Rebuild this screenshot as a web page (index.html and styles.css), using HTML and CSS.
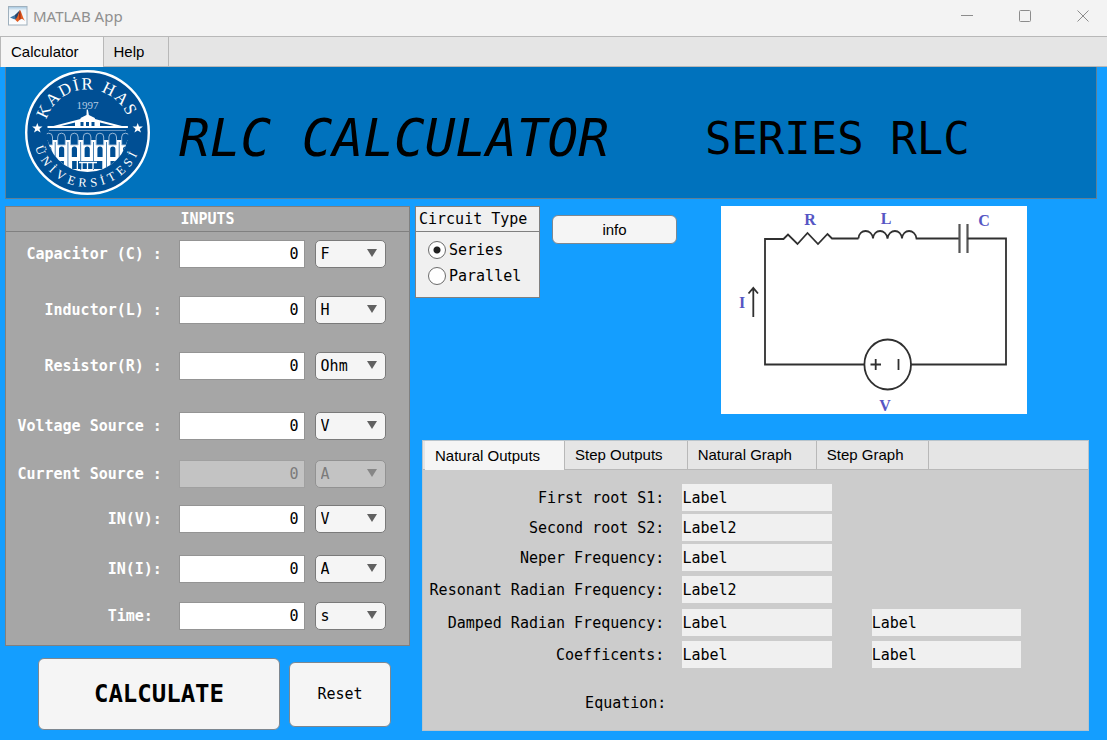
FILE: index.html
```html
<!DOCTYPE html>
<html lang="en">
<head>
<meta charset="utf-8">
<title>MATLAB App</title>
<link rel="stylesheet" href="styles.css">
</head>
<body>
<header class="titlebar">
  <svg class="app-icon" viewBox="0 0 20 20" aria-hidden="true">
    <defs><linearGradient id="ic" x1="0" y1="0" x2="0" y2="1"><stop offset="0" stop-color="#9fc4df"/><stop offset="0.2" stop-color="#e9f1f7"/><stop offset="1" stop-color="#ffffff"/></linearGradient></defs>
    <rect x="0.5" y="0.5" width="18.500" height="18.500" fill="url(#ic)" stroke="#9fb0bd"/>
    <path d="M2 11.500L7 9l2.500-1.500L7.500 13.500L5.500 13z" fill="#3f78a8"/>
    <path d="M7 9l5-5L9.500 13L7.500 13.500z" fill="#27466b"/>
    <path d="M12 4C13.500 6 14.500 11 17 15C14.500 12.500 13 12.500 11.500 14L9.500 16L7 13.500C9.500 12.500 10.500 7 12 4z" fill="#e05c22"/>
    <path d="M12 4C12.800 7 12.500 10 12.500 13L11.500 14L11 8z" fill="#9c2c14"/>
  </svg>
  <span class="app-name">MATLAB App</span>
  <div class="window-controls">
    <button class="window-button" aria-label="Minimize"><svg viewBox="0 0 12 12"><path d="M0 5.500H12"/></svg></button>
    <button class="window-button" aria-label="Maximize"><svg viewBox="0 0 12 12"><rect x="0.500" y="0.500" width="11" height="11" rx="1"/></svg></button>
    <button class="window-button" aria-label="Close"><svg viewBox="0 0 12 12"><path d="M0.500 0.500L11.500 11.500M11.500 0.500L0.500 11.500"/></svg></button>
  </div>
</header>
<nav class="tabs main-tabs" role="tablist">
  <button class="tab active" role="tab" aria-selected="true">Calculator</button>
  <button class="tab" role="tab" aria-selected="false">Help</button>
</nav>
<main class="app">
  <section class="banner">
    <svg class="logo" viewBox="0 0 126 126" role="img" aria-label="Kadir Has Üniversitesi">
      <defs>
        <path id="arc-top" d="M19.500 62.500A43 43 0 0 1 105.500 62.500"/>
        <path id="arc-bottom" d="M8 62.500A54.500 54.500 0 0 0 117 62.500"/>
        <clipPath id="facade"><circle cx="62.500" cy="61" r="41"/></clipPath>
      </defs>
      <circle cx="62.500" cy="62.500" r="61.300" fill="#004f94" stroke="#fff" stroke-width="2.400"/>
      <g class="logo-text">
        <text font-size="17" dx="0 1.500 1.500 1.500 1.500 1 3 1.500 1.500"><textPath href="#arc-top" startOffset="13">KADİR HAS</textPath></text>
        <text font-size="12.500" dx="0 4.400 4.400 4.400 4.400 4.400 4.400 4.400 4.400 4.400 4.400 4.400"><textPath href="#arc-bottom" startOffset="15">ÜNİVERSİTESİ</textPath></text>
        <text font-size="11" x="62.500" y="39" text-anchor="middle" class="logo-year">1997</text>
      </g>
      <g fill="#fff">
        <path d="M12.300 53l1.300 3.600h3.900l-3.100 2.300 1.200 3.700-3.300-2.200-3.300 2.200 1.200-3.700-3.100-2.300h3.900z"/>
        <path d="M112.700 53l1.300 3.600h3.900l-3.100 2.300 1.200 3.700-3.300-2.200-3.300 2.200 1.200-3.700-3.100-2.300h3.900z"/>
        <path d="M61.700 39.500h1.200l1 5.500 6 3v1l27 7h6v2H22.500V56h6l27-7v-1l6-3z"/>
      </g>
      <path d="M36 56l14-3.500V56zM89 56l-14-3.500V56zM55.500 56v-4h3v4zM66.500 56v-4h3v4zM61 56v-4h3v4z" fill="#004f94"/>
      <g clip-path="url(#facade)">
        <path d="M24 60.500H101" stroke="#7ea7cf" stroke-width="0.800"/>
        <path d="M22 70H103V104H22z" fill="#fff"/>
        <g fill="#004f94" stroke="#a9c5df" stroke-width="0.900">
          <path id="bay" d="M32.700 75V67a3.800 3.800 0 0 1 7.600 0v8z"/>
          <use href="#bay" x="-12.800"/><use href="#bay" x="12.800"/><use href="#bay" x="25.600"/><use href="#bay" x="38.400"/><use href="#bay" x="51.200"/><use href="#bay" x="64"/>
        </g>
        <g fill="#004f94">
          <path id="window" d="M34 87V79a2.600 2.600 0 0 1 5.200 0v8zM34.300 99V91h4.600v8zM42.600 72h.7v28h-.7z"/>
          <use href="#window" x="-12.800"/><use href="#window" x="12.800"/><use href="#window" x="25.600"/><use href="#window" x="38.400"/><use href="#window" x="51.200"/><use href="#window" x="64"/>
        </g>
        <path d="M53 91H73V99H53z" fill="#004f94"/>
        <path d="M54 92.500H72M57 93v6M62.500 93v6M68 93v6" stroke="#fff" stroke-width="1.300"/>
      </g>
    </svg>
    <h1 class="title">RLC CALCULATOR</h1>
    <p class="mode">SERIES RLC</p>
  </section>

  <div class="columns">
    <div class="left">
      <section class="inputs">
        <h2 class="inputs-title">INPUTS</h2>
        <form class="input-grid">
          <label class="input-label" for="cap">Capacitor (C) :</label>
          <input class="number" id="cap" value="0">
          <span class="unit"><select aria-label="Capacitor unit"><option>F</option></select></span>
          <label class="input-label" for="ind">Inductor(L) :</label>
          <input class="number" id="ind" value="0">
          <span class="unit"><select aria-label="Inductor unit"><option>H</option></select></span>
          <label class="input-label" for="res">Resistor(R) :</label>
          <input class="number" id="res" value="0">
          <span class="unit"><select aria-label="Resistor unit"><option>Ohm</option></select></span>
          <label class="input-label" for="vs">Voltage Source :</label>
          <input class="number" id="vs" value="0">
          <span class="unit"><select aria-label="Voltage source unit"><option>V</option></select></span>
          <label class="input-label" for="cs">Current Source :</label>
          <input class="number" id="cs" value="0" disabled>
          <span class="unit off"><select aria-label="Current source unit" disabled><option>A</option></select></span>
          <label class="input-label" for="inv">IN(V):</label>
          <input class="number" id="inv" value="0">
          <span class="unit"><select aria-label="IN(V) unit"><option>V</option></select></span>
          <label class="input-label" for="ini">IN(I):</label>
          <input class="number" id="ini" value="0">
          <span class="unit"><select aria-label="IN(I) unit"><option>A</option></select></span>
          <label class="input-label" for="time">Time:&nbsp;</label>
          <input class="number" id="time" value="0">
          <span class="unit"><select aria-label="Time unit"><option>s</option></select></span>
        </form>
      </section>
      <div class="actions">
        <button class="button calculate">CALCULATE</button>
        <button class="button reset">Reset</button>
      </div>
    </div>

    <div class="right">
      <div class="top-row">
        <section class="circuit-type" role="radiogroup" aria-labelledby="ct">
          <h2 class="circuit-title" id="ct">Circuit Type</h2>
          <div class="radios">
            <label class="radio"><input type="radio" name="type" checked>Series</label>
            <label class="radio"><input type="radio" name="type">Parallel</label>
          </div>
        </section>
        <button class="button info">info</button>
        <svg class="circuit" viewBox="0 0 306 208" role="img" aria-label="Series RLC circuit">
          <rect width="306" height="208" fill="#fff"/>
          <g fill="none" stroke="#303030" stroke-width="1.800">
            <path d="M143.500 158.500H44V33H62.500L67 28.500L76.500 38L86.500 27L97 38L106.500 28L111 32.500H137.500"/>
            <path d="M137.500 32.500C138 22.500 151 22.500 152 32.500C153 22.500 165 22.500 166.500 32.500C168 22.500 180 22.500 181 32.500C182 22.500 194 22.500 195.500 32.500H238.500"/>
            <path d="M238.500 18V47M246.500 18V47" stroke="#555" stroke-width="2.200"/>
            <path d="M246.500 32.500H285V158.500H190"/>
            <ellipse cx="166.700" cy="158.500" rx="23.300" ry="25"/>
            <path d="M149.500 158.500H160M154.700 153V164M177.500 153V164"/>
            <path d="M32.300 111V82M27.500 87.500L32.300 82L37 87.500"/>
          </g>
          <g class="circuit-text">
            <text x="89" y="19">R</text><text x="165" y="18">L</text><text x="263" y="20">C</text>
            <text x="21" y="102">I</text><text x="164" y="205">V</text>
          </g>
        </svg>
      </div>

      <section class="outputs">
        <div class="tabs output-tabs" role="tablist">
          <button class="tab active" role="tab" aria-selected="true">Natural Outputs</button>
          <button class="tab" role="tab" aria-selected="false">Step Outputs</button>
          <button class="tab" role="tab" aria-selected="false">Natural Graph</button>
          <button class="tab" role="tab" aria-selected="false">Step Graph</button>
        </div>
        <div class="output-grid">
          <label class="output-label" for="s1">First root S1:</label><output class="value" id="s1">Label</output>
          <label class="output-label" for="s2">Second root S2:</label><output class="value" id="s2">Label2</output>
          <label class="output-label" for="nf">Neper Frequency:</label><output class="value" id="nf">Label</output>
          <label class="output-label" for="rf">Resonant Radian Frequency:</label><output class="value" id="rf">Label2</output>
          <label class="output-label" for="df">Damped Radian Frequency:</label><output class="value" id="df">Label</output><output class="value second">Label</output>
          <label class="output-label" for="co">Coefficents:</label><output class="value" id="co">Label</output><output class="value second">Label</output>
          <span class="output-label equation">Equation:</span>
        </div>
      </section>
    </div>
  </div>
</main>
</body>
</html>
```
FILE: styles.css
```css
* { box-sizing: border-box; }

body {
  margin: 0;
  min-height: 100vh;
  display: flex;
  flex-direction: column;
  background: #149eff;
  color: #000;
  font: 15px/20px "DejaVu Sans Mono", monospace;
}

h1, h2, p { margin: 0; font-weight: normal; }
button, input, select { font: inherit; color: inherit; margin: 0; }

/* Window frame */
.titlebar {
  display: flex;
  align-items: center;
  height: 37px;
  padding: 0 18px 4px 8px;
  background: #f3f3f3;
  border-bottom: 1px solid #b8b8b8;
}
.app-icon { width: 20px; height: 20px; margin-right: 5px; }
.app-name { font: 15px/20px "Noto Sans", sans-serif; color: #8f8f8f; }
.window-controls { display: flex; gap: 46px; margin-left: auto; }
.window-button {
  display: flex;
  padding: 0;
  border: 0;
  background: none;
}
.window-button svg {
  width: 12px;
  height: 12px;
  fill: none;
  stroke: #8c8c8c;
  stroke-width: 1;
}

/* Tab strips */
.tabs {
  display: flex;
  height: 30px;
  background: #e5e5e5;
  border-bottom: 1px solid #b8b8b8;
}
.tab {
  height: 29px;
  padding: 0 24px 0 10px;
  border: 0;
  border-right: 1px solid #b8b8b8;
  background: #e5e5e5;
  font: 15px/20px "Liberation Sans", Arial, sans-serif;
}
.tab.active { height: 30px; background: #f5f5f5; }
.main-tabs { border-left: 1px solid #b8b8b8; }

/* Banner */
.app { flex: 1; padding: 0 10px 9px 5px; }
.banner {
  display: flex;
  align-items: center;
  height: 132px;
  padding-left: 19px;
  background: #0072bd;
  border: 1px solid #5f7f96;
  border-top: 0;
}
.logo { flex: none; width: 126px; height: 126px; margin-top: 1px; }
.logo-text { fill: #fff; font-family: "Liberation Serif", serif; }
.logo-year { fill: #b5cde4; }
.title { margin-left: 28px; font-size: 51px; line-height: 64px; font-style: italic; padding-top: 12px; }
.mode { margin-left: 96px; font-size: 44px; line-height: 64px; padding-top: 12px; }

/* Page columns */
.columns {
  display: grid;
  grid-template-columns: 405fr 682fr;
  gap: 5px;
  padding-top: 7px;
}

/* Inputs */
.inputs {
  background: #a6a6a6;
  border: 1px solid #808080;
  color: #fff;
  font-weight: bold;
}
.inputs-title {
  height: 25px;
  line-height: 24px;
  font-size: 15px;
  font-weight: bold;
  text-align: center;
  border-bottom: 1px solid #808080;
}
.input-grid {
  display: grid;
  grid-template-columns: 161fr 125fr 71fr;
  grid-template-rows: 56px 56px 60px 48px 45px 50px 47px 28px;
  column-gap: 10px;
  align-items: start;
  padding: 8px 23px 15px 1px;
}
.input-label { padding-right: 7px; line-height: 28px; text-align: right; white-space: nowrap; }
.number {
  width: 100%;
  min-width: 0;
  height: 28px;
  padding: 0 5px;
  border: 1px solid #949494;
  background: #fff;
  color: #000;
  font-weight: normal;
  text-align: right;
}
.number:disabled { background: #c3c3c3; color: #7b7b7b; border-color: #a0a0a0; }
.unit { display: grid; align-items: center; color: #000; font-weight: normal; }
.unit select {
  grid-area: 1 / 1;
  width: 100%;
  height: 28px;
  padding: 0 5px;
  appearance: none;
  border: 1px solid #7a7a7a;
  border-radius: 5px;
  background: #f5f5f5;
}
.unit::after {
  content: "";
  grid-area: 1 / 1;
  justify-self: end;
  margin: 0 9px 2px 0;
  border: 5px solid transparent;
  border-top: 8px solid #616161;
  border-bottom: 0;
  pointer-events: none;
}
.unit.off select { background: #c3c3c3; color: #7b7b7b; border-color: #929292; opacity: 1; }
.unit.off::after { border-top-color: #868686; }

/* Buttons */
.button {
  border: 1px solid #7d8790;
  border-radius: 6px;
  background: #f5f5f5;
}
.actions {
  display: grid;
  grid-template-columns: 242fr 102fr;
  gap: 9px;
  align-items: center;
  padding: 12px 19px 0 33px;
}
.calculate { height: 72px; font-size: 24px; font-weight: bold; }
.reset { height: 65px; }
.info { width: 125px; height: 29px; margin: 9px 0 0 12px; font-family: "Liberation Sans", Arial, sans-serif; }

/* Circuit selector and drawing */
.top-row { display: flex; align-items: flex-start; }
.circuit-type {
  width: 125px;
  background: #f0f0f0;
  border: 1px solid #808080;
}
.circuit-title {
  height: 25px;
  padding-left: 3px;
  line-height: 24px;
  font-size: 15px;
  white-space: nowrap;
  border-bottom: 1px solid #808080;
}
.radios { display: grid; gap: 6px; padding: 8px 0 11px 12px; }
.radio { display: flex; align-items: center; gap: 3px; }
.radio input {
  flex: none;
  width: 18px;
  height: 18px;
  appearance: none;
  border: 1px solid #6b6b6b;
  border-radius: 50%;
  background: #fff;
}
.radio input:checked { background: radial-gradient(circle, #222 3px, #fff 4px); }
.circuit { flex: 0 1 306px; height: 208px; margin: 0 70px 0 auto; }
.circuit-text {
  fill: #5656c4;
  font: bold 16px "Liberation Serif", serif;
  text-anchor: middle;
}

/* Outputs */
.outputs {
  margin: 26px 8px 0 7px;
  border: 1px solid #b8c4cc;
  background: #cccccc;
}
.output-tabs { height: 29px; padding-left: 2px; }
.output-tabs .tab { height: 28px; }
.output-tabs .tab.active { height: 29px; }
.output-grid {
  display: grid;
  grid-template-columns: 243fr 149fr 173fr 51fr;
  grid-template-rows: 30px 30px 32px 33px 32px 48px 28px;
  column-gap: 16px;
  align-items: start;
  padding: 14px 0 13px;
}
.output-label { grid-column: 1; padding-right: 2px; line-height: 28px; text-align: right; white-space: nowrap; }
.equation { padding-right: 0; }
.value { grid-column: 2; height: 27px; line-height: 28px; background: #f0f0f0; }
.second { grid-column: 3; margin-left: 24px; }
```
